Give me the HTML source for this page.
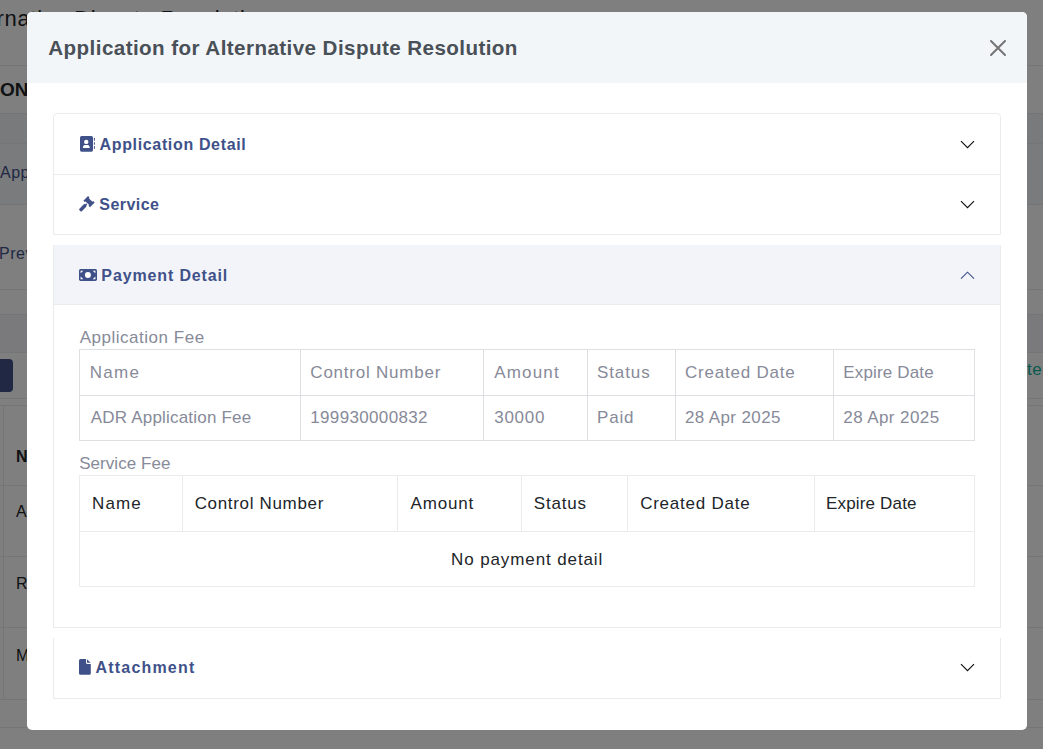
<!DOCTYPE html>
<html><head><meta charset="utf-8">
<style>
*{box-sizing:border-box;margin:0;padding:0}
html,body{width:1043px;height:749px;overflow:hidden}
body{position:relative;background:#fff;font-family:"Liberation Sans",sans-serif;color:#212529}
.a{position:absolute;white-space:nowrap}
.ln{position:absolute;left:0;width:1043px;height:1px;background:#e9ebec}
#backdrop{position:absolute;left:0;top:0;width:1043px;height:749px;background:rgba(0,0,0,.5)}
#modal{position:absolute;left:27px;top:12px;width:1000px;height:718px;background:#fff;border-radius:5px;overflow:hidden}
#mh{position:absolute;left:0;top:0;width:1000px;height:71px;background:#f3f6f9}
.t{position:absolute;white-space:nowrap}
</style></head><body>
<div id="bg">
  <div class="a" style="left:0;top:114px;width:1043px;height:90px;background:#f5f6f9"></div>
  <div class="a" style="left:0;top:114px;width:1043px;height:29px;background:#f3f5f8"></div>
  <div class="a" style="left:0;top:315px;width:1043px;height:37px;background:#f4f5f8"></div>
  <div class="a" style="left:-41.5px;top:8px;font-size:22px;line-height:22px;color:#212529;letter-spacing:0.7px"><span style="letter-spacing:0">Alte</span>rnative Dispute Resolution</div>
  <div class="ln" style="top:65px"></div>
  <div class="ln" style="top:113px"></div>
  <div class="ln" style="top:143px"></div>
  <div class="a" style="left:0px;top:79.5px;font-size:19px;line-height:19px;font-weight:bold;color:#212529">ON</div>
  <div class="ln" style="top:204px"></div>
  <div class="a" style="left:0px;top:165px;font-size:16px;line-height:16px;color:#405189;letter-spacing:0.5px">App</div>
  <div class="ln" style="top:289px"></div>
  <div class="a" style="left:-1px;top:246px;font-size:16px;line-height:16px;color:#405189;letter-spacing:0.5px">Prev</div>
  <div class="ln" style="top:314px"></div>
  <div class="ln" style="top:352px"></div>
  <div class="a" style="left:-6px;top:359px;width:19px;height:33px;background:#405189;border-radius:4px"></div>
  <div class="ln" style="top:398px"></div>
  <div class="ln" style="top:405px"></div>
  <div class="a" style="left:3px;top:405px;width:1px;height:295px;background:#e9ebec"></div>
  <div class="a" style="left:16px;top:448.5px;font-size:16px;line-height:16px;font-weight:bold;color:#212529">N</div>
  <div class="ln" style="top:485px"></div>
  <div class="a" style="left:16px;top:504px;font-size:16px;line-height:16px;color:#212529">A</div>
  <div class="ln" style="top:556px"></div>
  <div class="a" style="left:16px;top:575.5px;font-size:16px;line-height:16px;color:#212529">R</div>
  <div class="ln" style="top:627px"></div>
  <div class="a" style="left:16px;top:648px;font-size:16px;line-height:16px;color:#212529">M</div>
  <div class="ln" style="top:699px"></div>
  <div class="ln" style="top:727px"></div>
  <div class="a" style="left:1027px;top:361px;font-size:17px;line-height:17px;color:#0ab39c;letter-spacing:0.5px">ted</div>
</div>
<div id="backdrop"></div>
<div id="modal">
<div id="mh"></div>
<div class="a" style="left:26px;top:101px;width:948px;height:122px;border:1px solid #e9ebec;border-radius:4px 4px 0 0"></div>
<div class="a" style="left:27px;top:162px;width:946px;height:1px;background:#e9ebec"></div>
<div class="a" style="left:26px;top:233px;width:948px;height:383px;border:1px solid #e9ebec;border-top:0"></div>
<div class="a" style="left:27px;top:233px;width:946px;height:59px;background:#f3f4f9"></div>
<div class="a" style="left:27px;top:292px;width:946px;height:1px;background:#e9ebec"></div>
<div class="a" style="left:26px;top:626px;width:948px;height:61px;border:1px solid #e9ebec;border-top:0"></div>
</div>
<div class="a" style="left:79px;top:349px;width:896px;height:1px;background:#dddfe2"></div>
<div class="a" style="left:79px;top:395px;width:896px;height:1px;background:#dddfe2"></div>
<div class="a" style="left:79px;top:440px;width:896px;height:1px;background:#dddfe2"></div>
<div class="a" style="left:79px;top:349px;width:1px;height:92px;background:#dddfe2"></div>
<div class="a" style="left:300px;top:349px;width:1px;height:92px;background:#dddfe2"></div>
<div class="a" style="left:483px;top:349px;width:1px;height:92px;background:#dddfe2"></div>
<div class="a" style="left:587px;top:349px;width:1px;height:92px;background:#dddfe2"></div>
<div class="a" style="left:675px;top:349px;width:1px;height:92px;background:#dddfe2"></div>
<div class="a" style="left:833px;top:349px;width:1px;height:92px;background:#dddfe2"></div>
<div class="a" style="left:974px;top:349px;width:1px;height:92px;background:#dddfe2"></div>
<div class="a" style="left:79px;top:475px;width:896px;height:1px;background:#e9ebec"></div>
<div class="a" style="left:79px;top:531px;width:896px;height:1px;background:#e9ebec"></div>
<div class="a" style="left:79px;top:586px;width:896px;height:1px;background:#e9ebec"></div>
<div class="a" style="left:79px;top:475px;width:1px;height:112px;background:#e9ebec"></div>
<div class="a" style="left:974px;top:475px;width:1px;height:112px;background:#e9ebec"></div>
<div class="a" style="left:182px;top:475px;width:1px;height:57px;background:#e9ebec"></div>
<div class="a" style="left:397px;top:475px;width:1px;height:57px;background:#e9ebec"></div>
<div class="a" style="left:521px;top:475px;width:1px;height:57px;background:#e9ebec"></div>
<div class="a" style="left:627px;top:475px;width:1px;height:57px;background:#e9ebec"></div>
<div class="a" style="left:814px;top:475px;width:1px;height:57px;background:#e9ebec"></div>
<svg class="a" style="left:80px;top:136px" width="16" height="17" viewBox="0 0 16 17">
  <rect x="0" y="0" width="13" height="15.7" rx="1.6" fill="#405189"/>
  <circle cx="6.25" cy="5.9" r="2.2" fill="#fff"/>
  <path d="M2.8 12.1 L3.3 10.2 Q3.7 9 5 9 H7.6 Q8.9 9 9.3 10.2 L9.8 12.1Z" fill="#fff"/>
  <rect x="13.9" y="1.9" width="1" height="2.8" fill="#405189"/>
  <rect x="13.9" y="6.3" width="1" height="2.4" fill="#405189"/>
  <rect x="13.9" y="10.1" width="1" height="2.7" fill="#405189"/>
</svg>
<svg class="a" style="left:77px;top:194px" width="20" height="20" viewBox="0 0 20 20">
  <g transform="translate(12,7.6) rotate(45)">
    <path d="M-4.65 -3.3 H-2.6 V-2.3 H2.6 V-3.3 H4.65 V3.3 H2.6 V2.3 H-2.6 V3.3 H-4.65Z" fill="#405189"/>
    <rect x="-0.8" y="3.3" width="1.6" height="1.6" fill="#405189"/>
    <rect x="-1.7" y="4.6" width="3.4" height="8.2" rx="1" fill="#405189"/>
  </g>
</svg>
<svg class="a" style="left:79px;top:269px" width="18" height="12" viewBox="0 0 18 12">
  <rect x="0" y="0" width="18" height="11.9" rx="1.6" fill="#405189"/>
  <circle cx="8.9" cy="6" r="3" fill="#fff"/>
  <path d="M1.6 1.7H4.3L1.6 4.3Z M16.4 1.7H13.7L16.4 4.3Z M1.6 10.2H4.3L1.6 7.6Z M16.4 10.2H13.7L16.4 7.6Z" fill="#fff"/>
</svg>
<svg class="a" style="left:79px;top:659px" width="12" height="16" viewBox="0 0 12 16">
  <path d="M1.5 0H7V3.4Q7 4.9 8.5 4.9H11.8V14.2Q11.8 15.7 10.3 15.7H1.5Q0 15.7 0 14.2V1.5Q0 0 1.5 0Z" fill="#405189"/>
  <path d="M8 0.3L11.7 3.8H8Z" fill="#405189"/>
</svg>
<svg class="a" style="left:990px;top:40px" width="16" height="16" viewBox="0 0 16 16"><path d="M1 1L15 15M15 1L1 15" stroke="#757575" stroke-width="2" stroke-linecap="round"/></svg>
<svg class="a" style="left:960px;top:140px" width="15" height="9" viewBox="0 0 15 9"><path d="M1 1.2L7.5 7.6L14 1.2" fill="none" stroke="#0d0d0d" stroke-width="1.15"/></svg>
<svg class="a" style="left:960px;top:200px" width="15" height="9" viewBox="0 0 15 9"><path d="M1 1.2L7.5 7.6L14 1.2" fill="none" stroke="#0d0d0d" stroke-width="1.15"/></svg>
<svg class="a" style="left:960px;top:271px" width="15" height="9" viewBox="0 0 15 9"><path d="M1 7.6L7.5 1.2L14 7.6" fill="none" stroke="#405189" stroke-width="1.15"/></svg>
<svg class="a" style="left:960px;top:663px" width="15" height="9" viewBox="0 0 15 9"><path d="M1 1.2L7.5 7.6L14 1.2" fill="none" stroke="#0d0d0d" stroke-width="1.15"/></svg>
<div class="t" style="left:48.32px;top:37.50px;font-size:20.6px;line-height:20.6px;font-weight:bold;color:#495057;letter-spacing:0.424px">Application for Alternative Dispute Resolution</div>
<div class="t" style="left:99.54px;top:137.00px;font-size:16px;line-height:16px;font-weight:bold;color:#405189;letter-spacing:0.651px">Application Detail</div>
<div class="t" style="left:99.36px;top:197.00px;font-size:16px;line-height:16px;font-weight:bold;color:#405189;letter-spacing:0.450px">Service</div>
<div class="t" style="left:101.36px;top:268.00px;font-size:16px;line-height:16px;font-weight:bold;color:#405189;letter-spacing:0.861px">Payment Detail</div>
<div class="t" style="left:95.54px;top:660.00px;font-size:16px;line-height:16px;font-weight:bold;color:#405189;letter-spacing:1.190px">Attachment</div>
<div class="t" style="left:79.72px;top:329.00px;font-size:17px;line-height:17px;color:#878a99;letter-spacing:0.515px">Application Fee</div>
<div class="t" style="left:79.18px;top:455.00px;font-size:17px;line-height:17px;color:#878a99;letter-spacing:0.052px">Service Fee</div>
<div class="t" style="left:89.82px;top:364.00px;font-size:17px;line-height:17px;color:#878a99;letter-spacing:1.240px">Name</div>
<div class="t" style="left:310.37px;top:364.00px;font-size:17px;line-height:17px;color:#878a99;letter-spacing:0.767px">Control Number</div>
<div class="t" style="left:494.18px;top:364.00px;font-size:17px;line-height:17px;color:#878a99;letter-spacing:1.174px">Amount</div>
<div class="t" style="left:597.00px;top:364.00px;font-size:17px;line-height:17px;color:#878a99;letter-spacing:0.900px">Status</div>
<div class="t" style="left:684.91px;top:364.00px;font-size:17px;line-height:17px;color:#878a99;letter-spacing:0.787px">Created Date</div>
<div class="t" style="left:843.27px;top:364.00px;font-size:17px;line-height:17px;color:#878a99;letter-spacing:0.152px">Expire Date</div>
<div class="t" style="left:90.72px;top:409.00px;font-size:17px;line-height:17px;color:#878a99;letter-spacing:0.200px">ADR Application Fee</div>
<div class="t" style="left:310.27px;top:409.00px;font-size:17px;line-height:17px;color:#878a99;letter-spacing:0.341px">199930000832</div>
<div class="t" style="left:494.18px;top:409.00px;font-size:17px;line-height:17px;color:#878a99;letter-spacing:0.762px">30000</div>
<div class="t" style="left:597.00px;top:409.00px;font-size:17px;line-height:17px;color:#878a99;letter-spacing:0.820px">Paid</div>
<div class="t" style="left:684.91px;top:409.00px;font-size:17px;line-height:17px;color:#878a99;letter-spacing:0.383px">28 Apr 2025</div>
<div class="t" style="left:843.27px;top:409.00px;font-size:17px;line-height:17px;color:#878a99;letter-spacing:0.421px">28 Apr 2025</div>
<div class="t" style="left:92.09px;top:495.30px;font-size:17px;line-height:17px;color:#212529;letter-spacing:1.100px">Name</div>
<div class="t" style="left:194.64px;top:495.30px;font-size:17px;line-height:17px;color:#212529;letter-spacing:0.668px">Control Number</div>
<div class="t" style="left:410.54px;top:495.30px;font-size:17px;line-height:17px;color:#212529;letter-spacing:0.846px">Amount</div>
<div class="t" style="left:533.82px;top:495.30px;font-size:17px;line-height:17px;color:#212529;letter-spacing:0.786px">Status</div>
<div class="t" style="left:640.18px;top:495.30px;font-size:17px;line-height:17px;color:#212529;letter-spacing:0.757px">Created Date</div>
<div class="t" style="left:826.00px;top:495.30px;font-size:17px;line-height:17px;color:#212529;letter-spacing:0.168px">Expire Date</div>
<div class="t" style="left:451.09px;top:551.30px;font-size:17px;line-height:17px;color:#212529;letter-spacing:0.886px">No payment detail</div>
</body></html>
